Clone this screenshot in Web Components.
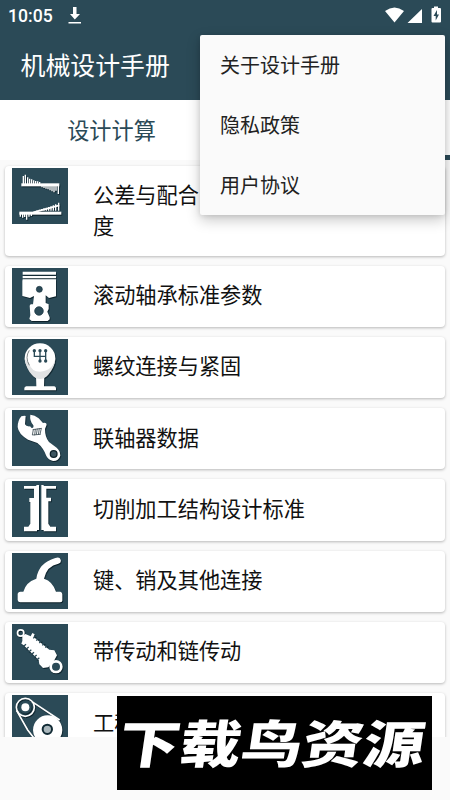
<!DOCTYPE html>
<html lang="zh-CN">
<head>
<meta charset="utf-8">
<title>机械设计手册</title>
<style>
html,body{margin:0;height:100%;overflow:hidden}
body{font-family:Roboto,"Noto Sans CJK SC",sans-serif;background:#fafafa}
</style>
</head>
<body>
<handbook-app></handbook-app>
<script>
const define = (name, html, setup) => customElements.define(name, class extends HTMLElement {
  constructor() {
    super();
    const t = document.createElement('template');
    t.innerHTML = html;
    this.attachShadow({ mode: 'open' }).append(t.content.cloneNode(true));
  }
  connectedCallback() { if (setup) setup(this, this.shadowRoot); }
});

const bars = (list, base) => list.map(([x, y]) => `<path d="M${x} ${base}V${y}"/>`).join('');
const icons = {
  tolerance: `<rect x="28" y="46" width="114" height="9"/><rect x="22" y="131" width="126" height="9"/>
    <g stroke="#fff" stroke-width="4">${bars([[34,24],[40,20],[47,28],[53,32],[59,34],[65,37],[71,39],[77,40],[83,42]],48)}
    ${bars([[90,58],[96,60],[102,62],[108,64],[114,67],[120,70],[126,73],[132,68],[139,78]],52)}
    ${bars([[25,146],[32,149],[38,147],[44,155],[51,146],[58,144]],136)}
    ${bars([[68,128],[75,127],[82,125],[89,123],[96,121],[103,119],[110,117],[117,115],[124,112],[131,109],[140,104]],128)}
    <path d="M64 133L142 112" stroke-width="5"/></g>`,
  piston: `<path d="M32 11H132V20H32zM32 24H132V31H32zM32 34H132V85L111 90L101 82V105L110 109V123L106 131L113 148V154L107 159H59L52 153L55 142L53 113L56 109H63L66 84L54 90L31 84V39z"/>
    <g fill="#2b4a57" stroke="#15313d" stroke-width="2"><circle cx="82" cy="64" r="9"/><circle cx="81" cy="129" r="13"/></g>`,
  gear: `<path d="M72 109H97L96 142H127Q132 143 132 148V154H37V148Q37 143 43 142H73z"/>
    <ellipse cx="84" cy="58" rx="46" ry="45"/><path d="M38 60Q43 91 60 108Q70 120 84 120Q97 120 109 107Q129 85 130 58Q122 97 84 98Q58 98 51 71Z" fill="#e1e3e4"/><path d="M52 34Q38 55 52 79" fill="none" stroke="#7f8587" stroke-width="3"/>
    <g fill="none" stroke="#2b4a57" stroke-width="4"><path d="M67 36V52H101V36M84 36V66M101 52V66"/></g>
    <g fill="#2b4a57"><circle cx="67" cy="35" r="5"/><circle cx="84" cy="35" r="5"/><circle cx="101" cy="35" r="5"/><circle cx="84" cy="66" r="5"/><circle cx="101" cy="66" r="5"/></g>`,
  wrench: `<path d="M28 19Q37 16 41 18L39 43Q42 50 54 49L59 54Q66 55 64 46Q52 32 55 14Q68 15 80 25L93 39Q104 37 104 44L99 57Q99 82 111 96L134 113Q145 122 145 137Q139 154 123 153Q109 150 103 138Q94 113 76 99L48 89Q19 72 17 51Q17 32 28 19z"/>
    <circle cx="125" cy="132" r="10" fill="#3c5560" stroke="#0d2028" stroke-width="4"/>
    <g stroke="#34444b" stroke-width="2.4" fill="none"><path d="M64 59L61 75M70 57L68 76M76 56L73 74M82 55L79 74M88 55L84 73M62 59L89 55M61 75L86 73"/></g>`,
  column: `<path d="M36 15H73V12H81V147H75V151H36V137H49L55 128V63H52V51H66V23H36zM88 12H95V15H132V23H103V50H117V61H109V128L115 137H132V151H95V147H88z"/>`,
  dome: `<path d="M73 77Q79 30 130 15Q143 10 146 20Q149 30 139 32Q105 38 96 77Q122 85 132 116H145Q151 118 151 124V143Q150 148 144 148H24Q17 147 17 141V122Q19 116 25 116H34Q42 87 73 77z"/>`,
  shock: `<circle cx="26" cy="27" r="9.5" fill="none" stroke="#fff" stroke-width="5"/><path d="M31 37L40 30L56 37L61 27L68 31L65 39L112 77L127 79L135 94L127 109L109 130L93 132L82 121L80 108L34 63L28 59L31 51z"/>
    <g stroke="#2b4a57" stroke-width="4"><path d="M35 67L42 61M43 75L50 69M51 83L58 77M59 91L66 85M67 99L74 93M75 107L82 101M64 43L70 36M73 50L79 43M82 57L88 50M91 64L97 57M100 71L106 64"/></g>
    <circle cx="132" cy="128" r="16" fill="#2b4a57" stroke="#fff" stroke-width="8"/>`,
  belt: `<g fill="none" stroke="#fff" stroke-width="5"><circle cx="40" cy="37" r="27"/><path d="M60 20L143 75M14 47L47 105L68 132"/></g><circle cx="40" cy="37" r="19" fill="#2b4a57"/><circle cx="40" cy="37" r="12"/>
    <circle cx="107" cy="105" r="44"/><circle cx="106" cy="103" r="14" fill="#aab7bc" stroke="#122b35" stroke-width="6"/>`
};

define('tool-icon', `<style>:host{display:block;width:56px;height:56px;background:#2b4a57;flex:none}svg{display:block;width:100%;height:100%;overflow:hidden}g.art{filter:drop-shadow(2px 3px 1px #0b2029)}</style><svg viewBox="0 0 168 168"><g class="art" fill="#fff"></g></svg>`,
  (el, root) => { root.querySelector('.art').innerHTML = icons[el.getAttribute('name')]; });

define('topic-card', `<style>
:host{display:flex;box-sizing:border-box;height:61.25px;flex:none;padding:2px 6.7px;background:#fff;border-radius:4px;box-shadow:0 1px 3px rgba(0,0,0,.27);align-items:flex-start}
:host([tall]){height:89.5px}
p{margin:12.6px 0 0 25.3px;font-size:21.2px;line-height:31.4px;color:#111;white-space:nowrap}
:host([tall]) p{margin-top:12px}
</style><p><slot></slot></p>`,
  (el, root) => {
    if (root.querySelector('tool-icon')) return;
    const icon = document.createElement('tool-icon');
    icon.setAttribute('name', el.getAttribute('icon'));
    root.querySelector('p').before(icon);
  });

define('status-bar', `<style>
:host{display:flex;height:32px;align-items:center;justify-content:space-between;padding:0 8px;color:#fff;font:500 17.6px/32px Roboto,sans-serif}
div{display:flex;align-items:center}svg{display:block;fill:#fff}
.l{gap:15px}
</style><div class="l"><span>10:05</span><svg width="14" height="20" viewBox="0 0 14 20"><path d="M5 1H8.5V8H12L6.8 13.5L2 8H5zM.5 16H13V17.600H.5z"/></svg></div>
<div><svg width="58" height="20" viewBox="0 0 58 20"><path d="M1 5Q10.500-2 20 5L10.500 16.500zM38 3V17H23.500z"/><path fill-rule="evenodd" d="M48.500 2H50V.500H54V2H56Q57 2 57 3V15.500Q57 16.500 56 16.500H48.500Q47.500 16.500 47.500 15.500V3Q47.500 2 48.500 2zM53 4L49.500 10H51.700V14.500L55 8.500H53z"/></svg></div>`);

define('app-header', `<style>
:host{display:block;height:100px;background:#2b4a57;color:#fff}
h1{margin:0;padding-left:20.5px;font-weight:400;font-size:24.9px;line-height:70px}
</style><status-bar></status-bar><h1><slot></slot></h1>`);

define('tab-strip', `<style>
:host{display:grid;grid-template:60px / 1fr 1fr;height:60px;background:#fff;color:#2b4a57;font-size:22.2px;line-height:63px;text-align:center}
span{padding-right:2px}
.on{border-bottom:5px solid #2b4a57;box-sizing:border-box;padding:0}
</style><span><slot></slot></span><span class="on"></span>`);

define('overflow-menu', `<style>
:host{position:absolute;left:200px;top:35px;width:245px;height:180px;border-radius:2px;background:#fafafa;box-shadow:0 5px 14px rgba(0,0,0,.22),0 1px 5px rgba(0,0,0,.1);display:grid;grid-template-rows:repeat(3,60px);color:#222;font-size:20px;line-height:62px}
::slotted(span){padding-left:20px}
</style><slot></slot>`);

define('site-mark', `<style>
:host{position:absolute;left:117px;top:696px;width:315px;height:94px;background:#000;color:#fff;display:flex;align-items:center;justify-content:center}
span{font:900 51px/94px "Noto Sans CJK SC",sans-serif;white-space:nowrap;transform:translate(-2px,-2px) scaleX(1.2) skewX(-7deg)}
</style><span><slot></slot></span>`);

define('handbook-app', `<style>
:host{display:block;position:relative;width:450px;height:800px;background:#fafafa;overflow:hidden}
main{height:577px;overflow:hidden;box-sizing:border-box;padding:6px 5px 0;display:flex;flex-direction:column;gap:10px}
</style>
<app-header>机械设计手册</app-header>
<tab-strip>设计计算</tab-strip>
<main>
<topic-card tall icon="tolerance">公差与配合<br>度</topic-card>
<topic-card icon="piston">滚动轴承标准参数</topic-card>
<topic-card icon="gear">螺纹连接与紧固</topic-card>
<topic-card icon="wrench">联轴器数据</topic-card>
<topic-card icon="column">切削加工结构设计标准</topic-card>
<topic-card icon="dome">键、销及其他连接</topic-card>
<topic-card icon="shock">带传动和链传动</topic-card>
<topic-card icon="belt">工程</topic-card>
</main>
<overflow-menu><span>关于设计手册</span><span>隐私政策</span><span>用户协议</span></overflow-menu>
<site-mark>下载鸟资源</site-mark>`);
</script>
</body>
</html>
